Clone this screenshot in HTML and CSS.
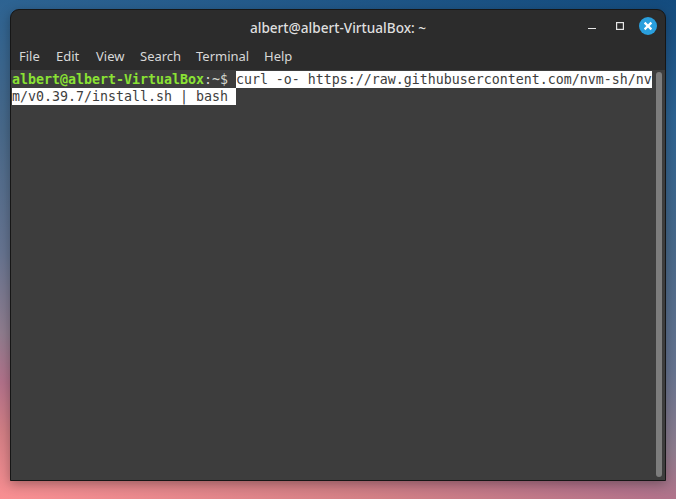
FILE: index.html
```html
<!DOCTYPE html>
<html lang="en">
<head>
<meta charset="utf-8">
<title>albert@albert-VirtualBox: ~</title>
<link rel="stylesheet" href="styles.css">
</head>
<body>
<div class="window">
  <header class="titlebar">
    <div class="title">albert@albert-VirtualBox: ~</div>
    <div class="controls">
      <svg class="ctl-min" width="8" height="18" viewBox="0 0 8 18"><path d="M0 11.5h8" stroke="#e6e6e6" stroke-width="1" fill="none"/></svg>
      <svg class="ctl-max" width="8" height="18" viewBox="0 0 8 18"><rect x=".6" y="5.6" width="6.8" height="6.8" stroke="#e6e6e6" stroke-width="1.2" fill="none"/></svg>
      <svg class="ctl-close" width="18" height="18" viewBox="0 0 18 18"><circle cx="9" cy="9" r="9" fill="#2a9fdd"/><path d="M5.6 5.6l6.8 6.8M12.4 5.6l-6.8 6.8" stroke="#fff" stroke-width="2.2" fill="none"/></svg>
    </div>
  </header>
  <nav class="menubar">
    <span class="menu">File</span><span class="menu">Edit</span><span class="menu">View</span><span class="menu">Search</span><span class="menu">Terminal</span><span class="menu">Help</span>
  </nav>
  <main class="terminal">
    <div class="screen">
      <div class="line"><span class="user">albert@albert-VirtualBox</span><span class="prompt">:~$ </span><span class="sel">curl -o- https://raw.githubusercontent.com/nvm-sh/nv</span></div>
      <div class="line"><span class="sel">m/v0.39.7/install.sh | bash </span></div>
    </div>
    <div class="scrollbar"><div class="thumb"></div></div>
  </main>
</div>
</body>
</html>
```
FILE: styles.css
```css
* { box-sizing: border-box; }
html, body { height: 100%; }
body {
  margin: 0;
  overflow: hidden;
  padding: 9px 10px 18px 10px;
  background: linear-gradient(190deg, #134b7e 0%, #2d6392 19%, #48698a 40%, #667490 60%, #8f7d8e 73%, #b2728a 81%, #d27f85 89%, #f98f92 100%);
}
.window {
  width: 656px;
  height: 472px;
  display: flex;
  flex-direction: column;
  background: #2c2c2c;
  border: 1px solid #161616;
  border-radius: 9px 9px 0 0;
  box-shadow: 0 3px 12px rgba(0,0,0,.3);
  overflow: hidden;
}
.titlebar {
  height: 34px;
  flex: none;
  display: flex;
  align-items: center;
  justify-content: center;
  position: relative;
}
.title {
  font: 500 13.6px/17px "Noto Sans", sans-serif;
  color: #dfdfdf;
}
.controls {
  position: absolute;
  right: 8px;
  top: 7px;
  display: flex;
}
.ctl-max { margin-left: 20px; }
.ctl-close { margin-left: 15px; }
.menubar {
  height: 26px;
  flex: none;
  display: grid;
  grid-template-columns: 37px 40px 44px 56px 68px auto;
  justify-content: start;
  padding-left: 8px;
  font: 13px/24px "Noto Sans", sans-serif;
  color: #d8d8d8;
}
.terminal {
  flex: 1;
  display: flex;
  background: #3d3d3d;
  min-height: 0;
}
.screen {
  flex: 1;
  padding: 1px 0 0 1px;
  font: 13.29px/17px "DejaVu Sans Mono", monospace;
  color: #d3d7cf;
}
.line { height: 17px; white-space: pre; display: flex; }
.user { color: #8ae234; font-weight: 700; }
.prompt { color: #d3d7cf; }
.sel { background: #fff; color: #3d3d3d; }
.scrollbar {
  width: 13px;
  flex: none;
  padding: 2px 3px 3px 4px;
}
.thumb {
  width: 6px;
  height: 100%;
  background: #7d7d7d;
  border-radius: 3px;
}
```
